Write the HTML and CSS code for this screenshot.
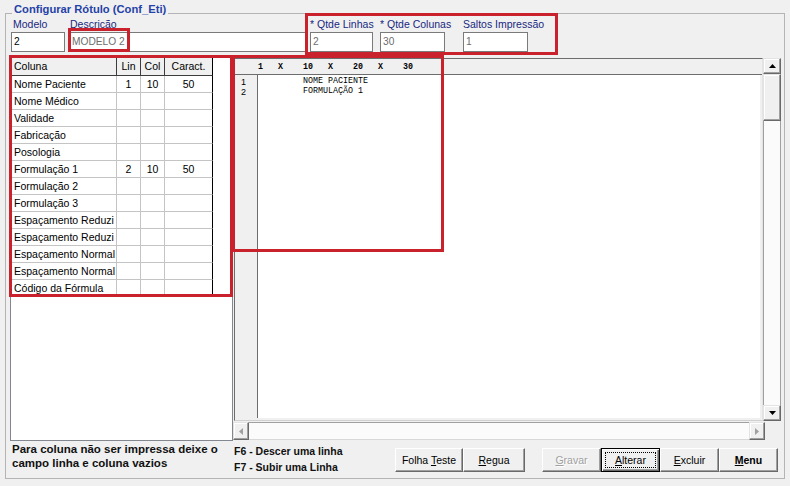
FILE: index.html
```html
<!DOCTYPE html>
<html lang="pt">
<head>
<meta charset="utf-8">
<title>Configurar Rótulo</title>
<link rel="stylesheet" href="styles.css">
</head>
<body>
<div class="group">
  <div class="title">Configurar Rótulo (Conf_Eti)</div>
  <div class="fields">
    <div class="field f-modelo"><div class="lbl">Modelo</div><div class="input">2</div></div>
    <div class="field f-desc"><div class="lbl">Descrição</div><div class="input dim">MODELO 2</div></div>
    <div class="field f-linhas"><div class="lbl">* Qtde Linhas</div><div class="input dim">2</div></div>
    <div class="field f-colunas"><div class="lbl">* Qtde Colunas</div><div class="input dim">30</div></div>
    <div class="field f-saltos"><div class="lbl">Saltos Impressão</div><div class="input dim">1</div></div>
  </div>
  <div class="main">
    <div class="left-panel">
      <div class="grid">
        <div class="th first">Coluna</div><div class="th">Lin</div><div class="th">Col</div><div class="th">Caract.</div>
        <div class="td first">Nome Paciente</div><div class="td">1</div><div class="td">10</div><div class="td last">50</div>
        <div class="td first">Nome Médico</div><div class="td"></div><div class="td"></div><div class="td last"></div>
        <div class="td first">Validade</div><div class="td"></div><div class="td"></div><div class="td last"></div>
        <div class="td first">Fabricação</div><div class="td"></div><div class="td"></div><div class="td last"></div>
        <div class="td first">Posologia</div><div class="td"></div><div class="td"></div><div class="td last"></div>
        <div class="td first">Formulação 1</div><div class="td">2</div><div class="td">10</div><div class="td last">50</div>
        <div class="td first">Formulação 2</div><div class="td"></div><div class="td"></div><div class="td last"></div>
        <div class="td first">Formulação 3</div><div class="td"></div><div class="td"></div><div class="td last"></div>
        <div class="td first">Espaçamento Reduzi</div><div class="td"></div><div class="td"></div><div class="td last"></div>
        <div class="td first">Espaçamento Reduzi</div><div class="td"></div><div class="td"></div><div class="td last"></div>
        <div class="td first">Espaçamento Normal</div><div class="td"></div><div class="td"></div><div class="td last"></div>
        <div class="td first">Espaçamento Normal</div><div class="td"></div><div class="td"></div><div class="td last"></div>
        <div class="td first">Código da Fórmula</div><div class="td"></div><div class="td"></div><div class="td last"></div>
      </div>
    </div>
    <div class="right-col">
      <div class="memo-row">
        <div class="memo">
          <div class="ruler">1   X    10   X    20   X    30</div>
          <div class="memo-body">
            <div class="gutter"><div>1</div><div>2</div></div>
            <div class="text"><div>         NOME PACIENTE</div><div>         FORMULAÇÃO 1</div></div>
          </div>
        </div>
        <div class="vscroll">
          <div class="sb-btn"><svg width="7" height="4" viewBox="0 0 7 4"><polygon points="0,4 7,4 3.5,0" fill="#000"/></svg></div>
          <div class="thumb"></div>
          <div class="track"></div>
          <div class="sb-btn"><svg width="7" height="4" viewBox="0 0 7 4"><polygon points="0,0 7,0 3.5,4" fill="#000"/></svg></div>
        </div>
      </div>
      <div class="hscroll">
        <div class="sb-btn hbtn"><svg width="4" height="7" viewBox="0 0 4 7"><polygon points="4,0 4,7 0,3.5" fill="#a0a0a0"/></svg></div>
        <div class="htrack"></div>
        <div class="sb-btn hbtn"><svg width="4" height="7" viewBox="0 0 4 7"><polygon points="0,0 0,7 4,3.5" fill="#a0a0a0"/></svg></div>
      </div>
    </div>
  </div>
  <div class="bottom">
    <div class="note">Para coluna não ser impressa deixe o campo linha e coluna vazios</div>
    <div class="keys"><div>F6 - Descer uma linha</div><div>F7 - Subir uma Linha</div></div>
    <div class="btns">
      <div class="btn w-folha"><span>Folha <u>T</u>este</span></div>
      <div class="btn w-regua"><span><u>R</u>egua</span></div>
      <div class="btn w-std disabled gap"><span><u>G</u>ravar</span></div>
      <div class="btn w-std default"><span class="focus"><span><u>A</u>lterar</span></span></div>
      <div class="btn w-std"><span><u>E</u>xcluir</span></div>
      <div class="btn w-std bold"><span><u>M</u>enu</span></div>
    </div>
  </div>
</div>
<div class="hl hl-1"></div>
<div class="hl hl-2"></div>
<div class="hl hl-3"></div>
<div class="hl hl-4"></div>
</body>
</html>
```
FILE: styles.css
```css
* { box-sizing: border-box; }
html, body { margin: 0; padding: 0; }
body {
  width: 790px;
  height: 486px;
  background: #f0f0f0;
  font-family: "Liberation Sans", Arial, sans-serif;
  font-size: 10.5px;
  color: #000;
  overflow: hidden;
  position: relative;
}

.group {
  margin: 13px 5px 0;
  height: 466px;
  border: 1px solid #b4b4b4;
  display: flex;
  flex-direction: column;
}
.title {
  align-self: flex-start;
  margin: -12px 0 0 6px;
  padding: 0 2px;
  height: 14px;
  line-height: 14px;
  background: #f0f0f0;
  color: #2442a8;
  font-weight: bold;
  font-size: 11.2px;
  white-space: nowrap;
}

.fields { display: flex; height: 36px; }
.field { display: flex; flex-direction: column; }
.lbl {
  height: 15px;
  padding-top: 2px;
  line-height: 13px;
  color: #182880;
  white-space: nowrap;
}
.input {
  margin-top: 1px;
  height: 20px;
  line-height: 18px;
  border: 1px solid #7a7a7a;
  background: #fff;
  padding-left: 2px;
  font-size: 10.2px;
  white-space: nowrap;
}
.input.dim { color: #6d6d6d; }
.f-modelo { margin-left: 5px; width: 54px; }
.f-modelo .lbl { padding-left: 2px; }
.f-desc { margin-left: 4px; width: 237px; }
.f-desc .lbl { padding-left: 1px; }
.f-linhas { margin-left: 4px; width: 63px; }
.f-colunas { margin-left: 7px; width: 65px; }
.f-saltos { margin-left: 18px; width: 65px; }

.main {
  display: flex;
  margin-top: 5px;
  padding-left: 4px;
  height: 384px;
}
.left-panel {
  width: 223px;
  height: 384px;
  background: #fff;
  border: 1px solid #828790;
}
.grid {
  display: grid;
  grid-template-columns: 106px 24px 24px 48px;
  grid-auto-rows: 17px;
  grid-template-rows: 18px;
  width: 202px;
}
.th, .td {
  line-height: 16px;
  white-space: nowrap;
  overflow: hidden;
  text-align: center;
}
.th {
  background: #f0f0f0;
  border-right: 1px solid #3c3c3c;
  border-bottom: 1px solid #3c3c3c;
  line-height: 17px;
}
.td {
  border-right: 1px solid #c4c4c4;
  border-bottom: 1px solid #c4c4c4;
}
.td.last { border-right-color: #000; }
.th:nth-child(4) { border-right-color: #000; }
.th.first, .td.first { text-align: left; padding-left: 3px; }

.right-col {
  width: 548px;
  display: flex;
  flex-direction: column;
}
.memo-row {
  display: flex;
  height: 363px;
  margin-top: 1px;
}
.memo {
  margin-left: 1px;
  width: 529px;
  height: 363px;
  border: 1px solid;
  border-color: #6d6d6d #e3e3e3 #d0d0d0 #6d6d6d;
  background: #f0f0f0;
  display: flex;
  flex-direction: column;
}
.ruler {
  height: 15px;
  line-height: 15px;
  padding-left: 23px;
  padding-top: 1px;
  font-family: "Liberation Mono", "Courier New", monospace;
  font-size: 8.33px;
  font-weight: bold;
  white-space: pre;
}
.memo-body {
  flex: 1;
  display: flex;
  border-top: 1px solid #6d6d6d;
  margin-bottom: 2px;
}
.gutter {
  width: 23px;
  border-right: 1px solid #6d6d6d;
  padding: 2px 0 0 6px;
  font-size: 9px;
  line-height: 10px;
}
.text {
  flex: 1;
  background: #fff;
  margin-right: 2px;
  padding-top: 1px;
  font-family: "Liberation Mono", "Courier New", monospace;
  font-size: 8.33px;
  line-height: 10px;
  white-space: pre;
}

.vscroll {
  width: 18px;
  height: 363px;
  display: flex;
  flex-direction: column;
}
.sb-btn {
  height: 16px;
  background: #f0f0f0;
  border: 1px solid;
  border-color: #e3e3e3 #696969 #696969 #e3e3e3;
  box-shadow: inset -1px -1px #a0a0a0, inset 1px 1px #fff;
  display: flex;
  align-items: center;
  justify-content: center;
}
.thumb {
  height: 47px;
  background: #f0f0f0;
  border: 1px solid;
  border-color: #e3e3e3 #696969 #696969 #e3e3e3;
  box-shadow: inset -1px -1px #a0a0a0, inset 1px 1px #fff;
}
.track {
  flex: 1;
  background: #fbfbfb;
  border-left: 1px solid #a0a0a0;
  border-right: 1px solid #a0a0a0;
}
.hscroll {
  margin-top: 1px;
  width: 532px;
  height: 18px;
  display: flex;
}
.hbtn { width: 16px; height: 18px; }
.htrack {
  flex: 1;
  background: #fbfbfb;
  border-top: 1px solid #a0a0a0;
  border-bottom: 1px solid #d8d8d8;
}

.bottom {
  display: flex;
  padding-left: 6px;
  height: 37px;
}
.note {
  width: 222px;
  margin-top: 2px;
  font-weight: bold;
  font-size: 11.5px;
  line-height: 13.5px;
  color: #111;
}
.keys {
  width: 161px;
  margin-top: 2px;
  font-weight: bold;
  font-size: 10.5px;
  line-height: 16px;
  color: #111;
}
.btns {
  display: flex;
  margin-top: 7px;
  height: 24px;
}
.btn {
  height: 24px;
  background: #f0f0f0;
  border: 1px solid;
  border-color: #fff #696969 #696969 #fff;
  box-shadow: inset -1px -1px #a0a0a0;
  display: flex;
  align-items: center;
  justify-content: center;
  font-size: 10.5px;
  white-space: nowrap;
}
.w-folha { width: 68px; }
.w-regua { width: 62px; }
.w-std { width: 59px; }
.gap { margin-left: 17px; }
.btn.disabled { color: #a0a0a0; text-shadow: 1px 1px #fff; }
.btn.bold { font-weight: bold; }
.btn.default {
  border: 1px solid #000;
  box-shadow: inset 1px 1px #fff, inset -1px -1px #696969, inset -2px -2px #a0a0a0;
  padding: 3px;
}
.focus {
  flex: 1;
  align-self: stretch;
  border: 1px dotted #000;
  display: flex;
  align-items: center;
  justify-content: center;
}

.hl {
  position: absolute;
  border: 3px solid #c9222c;
  pointer-events: none;
}
.hl-1 { left: 68px; top: 28px; width: 62px; height: 24px; }
.hl-2 { left: 305px; top: 13px; width: 253px; height: 42px; }
.hl-3 { left: 9px; top: 55px; width: 224px; height: 242px; }
.hl-4 { left: 232px; top: 55px; width: 212px; height: 197px; }
```
